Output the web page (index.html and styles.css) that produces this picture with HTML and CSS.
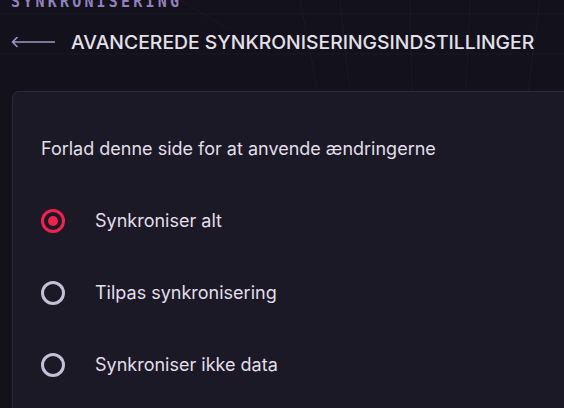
FILE: index.html
```html
<!DOCTYPE html>
<html lang="da">
<head>
<meta charset="utf-8">
<title>Avancerede synkroniseringsindstillinger</title>
<link rel="stylesheet" href="styles.css">
</head>
<body>
<div class="page">
  <div class="eyebrow">SYNKRONISERING</div>
  <div class="titlebar">
    <svg class="back" width="44" height="12" viewBox="0 0 44 12" aria-hidden="true">
      <path d="M6 1.5 L1.5 6 L6 10.5 M1.5 6 H44" fill="none" stroke="#a497c6" stroke-width="1.6" stroke-linecap="round" stroke-linejoin="round"/>
    </svg>
    <h1 class="title">AVANCEREDE SYNKRONISERINGSINDSTILLINGER</h1>
  </div>
  <section class="card">
    <p class="intro">Forlad denne side for at anvende ændringerne</p>
    <div class="options">
      <label class="option"><span class="radio checked"></span><span class="label">Synkroniser alt</span></label>
      <label class="option"><span class="radio"></span><span class="label">Tilpas synkronisering</span></label>
      <label class="option"><span class="radio"></span><span class="label">Synkroniser ikke data</span></label>
    </div>
  </section>
</div>
</body>
</html>
```
FILE: styles.css
```css
html, body {
  margin: 0;
  padding: 0;
  background: #13111b;
  overflow: hidden;
}
body {
  width: 564px;
  height: 408px;
  font-family: Inter, "Noto Sans", sans-serif;
  background-color: #13111b;
  background-image: url("data:image/svg+xml;utf8,<svg xmlns='http://www.w3.org/2000/svg' width='564' height='92'><g stroke='%23ffffff' stroke-opacity='0.035' stroke-width='1' fill='none'><path d='M300 0 L318 92'/><path d='M340 0 L350 92'/><path d='M410 0 L412 92'/><path d='M470 0 L466 92'/><path d='M540 0 L528 92'/><path d='M180 0 L230 30'/><path d='M0 14 H564'/><path d='M0 54 H564'/></g></svg>");
  background-repeat: no-repeat;
}
.page {
  padding-left: 12px;
}
.eyebrow {
  margin-top: -7px;
  margin-left: -1px;
  height: 18px;
  line-height: 18px;
  font-family: "DejaVu Sans Mono", monospace;
  font-weight: 700;
  font-size: 15px;
  letter-spacing: 3.2px;
  color: #9182bb;
}
.titlebar {
  display: flex;
  align-items: center;
  gap: 16px;
  height: 62px;
  margin-top: 0;
  margin-left: -1px;
}
.back {
  flex: none;
}
.title {
  margin: 0;
  font-family: Inter, sans-serif;
  font-weight: 500;
  font-size: 19.35px;
  color: #e3e0ea;
  white-space: nowrap;
}
.card {
  margin-top: 18px;
  margin-right: -40px;
  background: #1c1927;
  border: 1px solid #2d2840;
  border-radius: 7px;
  padding: 44px 28px 0;
  height: 400px;
}
.intro {
  margin: 0;
  font-size: 18px;
  line-height: 26px;
  color: #e2dfe9;
}
.options {
  display: flex;
  flex-direction: column;
  margin-top: 23px;
}
.option {
  display: flex;
  align-items: center;
  gap: 30px;
  height: 72px;
}
.radio {
  flex: none;
  width: 24px;
  height: 24px;
  box-sizing: border-box;
  border: 3px solid #c5bfd8;
  border-radius: 50%;
  display: flex;
  align-items: center;
  justify-content: center;
}
.radio.checked {
  border-color: #f0224c;
}
.radio.checked::after {
  content: "";
  width: 10px;
  height: 10px;
  border-radius: 50%;
  background: #f0224c;
}
.label {
  font-size: 18px;
  line-height: 26px;
  color: #e2dfe9;
}
```
